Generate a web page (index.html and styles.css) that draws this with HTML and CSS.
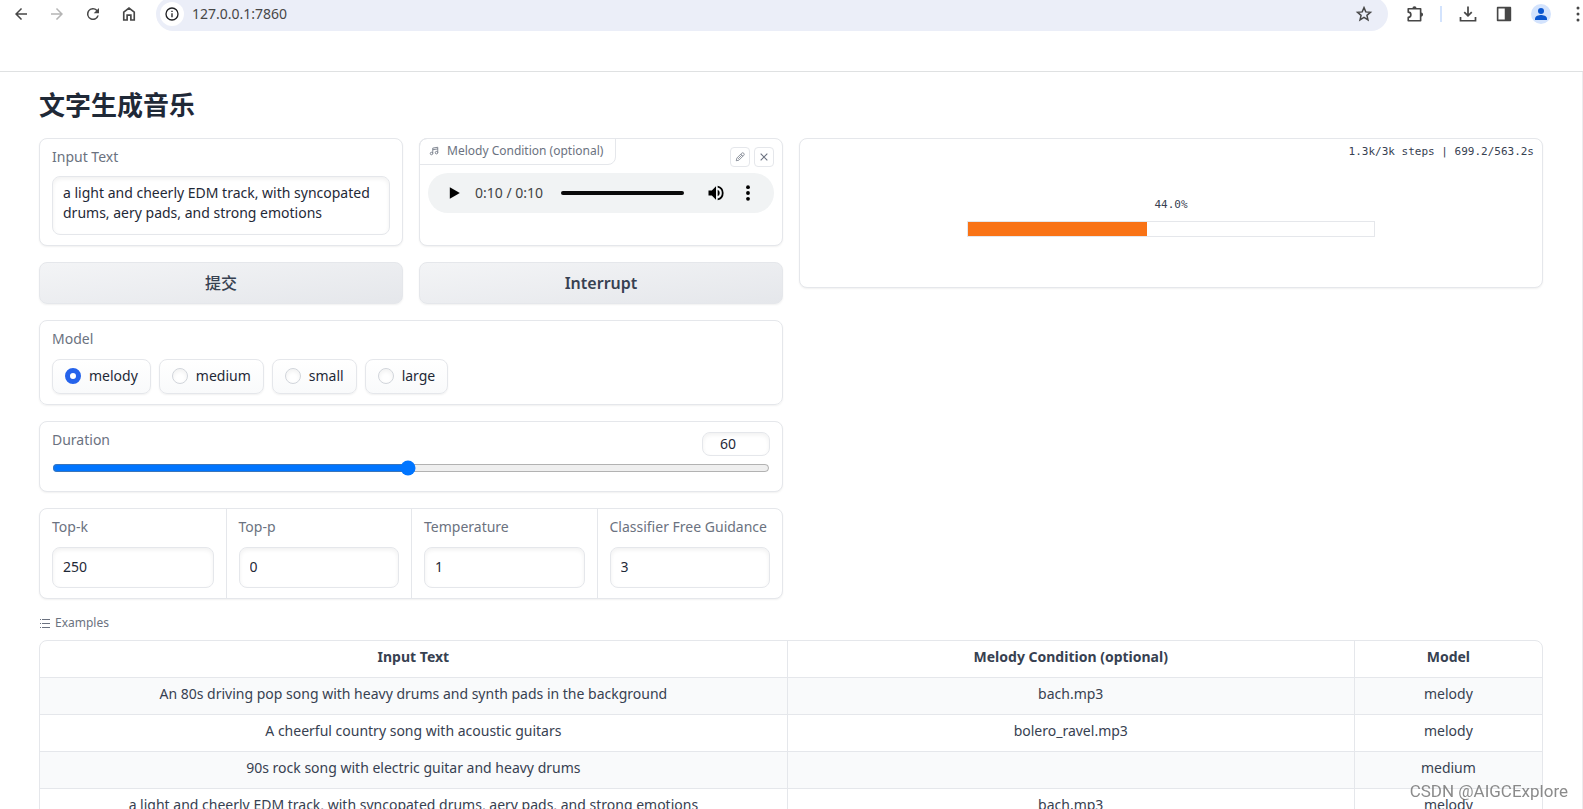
FILE: index.html
```html
<!DOCTYPE html>
<html lang="zh">
<head>
<meta charset="utf-8">
<title>文字生成音乐</title>
<link rel="stylesheet" href="styles.css">
</head>
<body>
<header class="browser">
  <nav class="toolbar" aria-label="Browser">
    <button class="tool" aria-label="Back"><svg viewBox="0 0 24 24"><path d="M20 11H7.8l5.6-5.6L12 4l-8 8 8 8 1.400-1.400L7.800 13H20z"/></svg></button>
    <button class="tool faded" aria-label="Forward"><svg viewBox="0 0 24 24"><path d="M4 11h12.200l-5.600-5.600L12 4l8 8-8 8-1.400-1.400 5.600-5.600H4z"/></svg></button>
    <button class="tool" aria-label="Reload"><svg viewBox="0 0 24 24"><path d="M17.650 6.350A8 8 0 1 0 19.730 14h-2.080A6 6 0 1 1 12 6c1.660 0 3.140.690 4.220 1.780L13 11h7V4z"/></svg></button>
    <button class="tool" aria-label="Home"><svg viewBox="0 0 24 24" fill="none" stroke="currentColor" stroke-width="2.200"><path d="M5 9.500 12 4l7 5.500V20h-4.500v-6.500h-5V20H5z"/></svg></button>
    <div class="address">
      <button class="info" aria-label="Site information"><svg viewBox="0 0 24 24"><path d="M11 7h2v2h-2zm0 4h2v6h-2zm1-9a10 10 0 1 0 0 20 10 10 0 0 0 0-20zm0 18a8 8 0 1 1 0-16 8 8 0 0 1 0 16z"/></svg></button>
      <input class="url" aria-label="Address" value="127.0.0.1:7860">
      <button class="tool star" aria-label="Bookmark"><svg viewBox="0 0 24 24" fill="none" stroke="currentColor" stroke-width="2"><path d="m12 3.500 2.400 5.700 6.200.500-4.700 4.100 1.400 6-5.300-3.200-5.300 3.200 1.400-6-4.700-4.100 6.200-.500z"/></svg></button>
    </div>
    <button class="tool" aria-label="Extensions"><svg viewBox="0 0 24 24"><path fill="none" stroke="currentColor" stroke-width="2.200" stroke-linejoin="round" d="M3 5h16.500v16H3v-4.500a3.500 3.500 0 0 0 0-7z"/><path d="M8.500 4.500a2.800 2.800 0 0 1 5.600 0zM20 10a2.800 2.800 0 0 1 0 5.600z"/></svg></button>
    <span class="separator"></span>
    <button class="tool" aria-label="Downloads"><svg viewBox="0 0 24 24" fill="none" stroke="currentColor" stroke-width="2.300"><path d="M12 2v12M7 9.500l5 5 5-5M2 16v5h20v-5"/></svg></button>
    <button class="tool" aria-label="Side panel"><svg viewBox="0 0 24 24"><path fill="none" stroke="currentColor" stroke-width="2.200" stroke-linejoin="round" d="M3.500 3.500h17v17h-17z"/><path d="M13 3.500h7.500v17H13z"/></svg></button>
    <button class="avatar" aria-label="Profile"><svg viewBox="0 0 20 20"><circle cx="10" cy="7" r="3"/><path d="M4 16v-1.500C4 12 8 11 10 11s6 1 6 3.500V16z"/></svg></button>
    <button class="tool kebab" aria-label="Menu"><svg viewBox="0 0 24 24"><circle cx="12" cy="4" r="2"/><circle cx="12" cy="12" r="2"/><circle cx="12" cy="20" r="2"/></svg></button>
  </nav>
</header>
<main class="page">
  <h1>文字生成音乐</h1>
  <div class="columns">
    <form class="stack">
      <div class="pair">
        <div class="card padded">
          <label class="label" for="prompt">Input Text</label>
          <textarea id="prompt" class="field prompt" rows="2">a light and cheerly EDM track, with syncopated drums, aery pads, and strong emotions</textarea>
        </div>
        <section class="card audio-card">
          <div class="audio-label"><svg viewBox="0 0 24 24" fill="none" stroke="currentColor" stroke-width="2"><path d="M9 18V5l12-2v13M9 9l12-2"/><circle cx="6" cy="18" r="3"/><circle cx="18" cy="16" r="3"/></svg>Melody Condition (optional)</div>
          <div class="audio-actions">
            <button type="button" aria-label="Edit"><svg viewBox="0 0 24 24" fill="none" stroke="currentColor" stroke-width="1.800"><path d="m3 21 1.500-6.500L16 3a3.300 3.300 0 0 1 5 5L9.500 19.500zM14 5l5 5M7.500 16.500l9-9"/></svg></button>
            <button type="button" aria-label="Clear"><svg viewBox="0 0 24 24" fill="none" stroke="currentColor" stroke-width="2.600"><path d="m4 4 16 16M20 4 4 20"/></svg></button>
          </div>
          <div class="player">
            <button type="button" aria-label="Play"><svg viewBox="0 0 24 24"><path d="M7 5v14l12-7z"/></svg></button>
            <span class="time">0:10 / 0:10</span>
            <span class="timeline"></span>
            <button type="button" aria-label="Volume"><svg viewBox="0 0 24 24"><path d="M3 9v6h4l5 5V4L7 9zm13.500 3A4.500 4.500 0 0 0 14 8v8a4.500 4.500 0 0 0 2.500-4zM14 3.200v2.100a7 7 0 0 1 0 13.400v2.100a9 9 0 0 0 0-17.600z"/></svg></button>
            <button type="button" aria-label="More"><svg viewBox="0 0 24 24"><circle cx="12" cy="5" r="2.300"/><circle cx="12" cy="12" r="2.300"/><circle cx="12" cy="19" r="2.300"/></svg></button>
          </div>
        </section>
      </div>
      <div class="pair">
        <button type="button" class="action submit">提交</button>
        <button type="button" class="action">Interrupt</button>
      </div>
      <fieldset class="card padded">
        <div class="label">Model</div>
        <div class="options">
          <label class="option"><input type="radio" name="model" checked>melody</label>
          <label class="option"><input type="radio" name="model">medium</label>
          <label class="option"><input type="radio" name="model">small</label>
          <label class="option"><input type="radio" name="model">large</label>
        </div>
      </fieldset>
      <div class="card padded duration">
        <div class="duration-head">
          <label class="label" for="duration">Duration</label>
          <input class="field amount" type="number" aria-label="Duration in seconds" value="60">
        </div>
        <input id="duration" class="slider" type="range" min="1" max="120" value="60">
      </div>
      <div class="card numbers">
        <div class="number"><label class="label" for="topk">Top-k</label><input id="topk" class="field" type="number" value="250"></div>
        <div class="number"><label class="label" for="topp">Top-p</label><input id="topp" class="field" type="number" value="0"></div>
        <div class="number"><label class="label" for="temp">Temperature</label><input id="temp" class="field" type="number" value="1"></div>
        <div class="number"><label class="label" for="cfg">Classifier Free Guidance</label><input id="cfg" class="field" type="number" value="3"></div>
      </div>
    </form>
    <section class="card output">
      <div class="steps">1.3k/3k steps | 699.2/563.2s</div>
      <div class="progress">
        <div class="percent">44.0%</div>
        <div class="bar"><div class="bar-fill" style="width:44%"></div></div>
      </div>
    </section>
  </div>
  <section>
    <div class="examples-label"><svg viewBox="0 0 12 12" fill="none" stroke="currentColor"><path d="M3 2.500h8M3 6.500h8M3 10.500h8M1 2.500h1M1 6.500h1M1 10.500h1"/></svg>Examples</div>
    <div class="table-wrap">
      <table>
        <colgroup><col class="c-text"><col class="c-melody"><col></colgroup>
        <thead><tr><th>Input Text</th><th>Melody Condition (optional)</th><th>Model</th></tr></thead>
        <tbody>
          <tr><td>An 80s driving pop song with heavy drums and synth pads in the background</td><td>bach.mp3</td><td>melody</td></tr>
          <tr><td>A cheerful country song with acoustic guitars</td><td>bolero_ravel.mp3</td><td>melody</td></tr>
          <tr><td>90s rock song with electric guitar and heavy drums</td><td></td><td>medium</td></tr>
          <tr><td>a light and cheerly EDM track, with syncopated drums, aery pads, and strong emotions</td><td>bach.mp3</td><td>melody</td></tr>
        </tbody>
      </table>
    </div>
  </section>
</main>
<div class="watermark">CSDN @AIGCExplore</div>
</body>
</html>
```
FILE: styles.css
```css
* { box-sizing: border-box; }

body {
  margin: 0;
  height: 100vh;
  overflow: hidden;
  display: flex;
  flex-direction: column;
  background: #fff;
  color: #1f2937;
  font: 14px/20px "Noto Sans", "Noto Sans CJK SC", sans-serif;
}

button, input, textarea { font: inherit; color: inherit; margin: 0; }
button { border: 0; padding: 0; background: none; }
svg { display: block; fill: currentColor; }
svg[fill="none"] { fill: none; }

.browser {
  flex: none;
  height: 72px;
  border-bottom: 1px solid #dfe1e2;
}
.toolbar {
  display: flex;
  align-items: center;
  height: 28px;
  padding-left: 12px;
  gap: 18px;
  color: #474747;
}
.tool { flex: none; width: 18px; }
.tool svg { width: 18px; height: 18px; }
.faded { color: #b5b5b5; }
.address {
  flex: 1;
  display: flex;
  align-items: center;
  height: 34px;
  padding: 0 15px 0 4px;
  gap: 8px;
  border-radius: 17px;
  background: #ebeef8;
}
.info {
  flex: none;
  display: grid;
  place-items: center;
  width: 24px;
  height: 24px;
  border-radius: 50%;
  background: #fff;
  color: #202124;
}
.info svg { width: 16px; height: 16px; }
.url {
  flex: 1;
  min-width: 0;
  border: 0;
  padding: 0;
  background: none;
  color: #474747;
}
.separator { width: 2px; height: 16px; margin: 0 -1px 0 -2px; background: #d3e3fd; }
.avatar {
  flex: none;
  width: 20px;
  height: 20px;
  border-radius: 50%;
  background: #d3e3fd;
  color: #0b57d0;
}
.kebab { margin-right: -4px; }

.page {
  flex: 1;
  min-height: 0;
  overflow: hidden;
  padding: 16px 39px 0;
  border-right: 1px solid #ececee;
}
h1 { margin: 0 0 16px; font-size: 26px; line-height: 34px; }

.columns {
  display: grid;
  grid-template-columns: 1fr 1fr;
  align-items: start;
  gap: 16px;
}
.stack { display: grid; gap: 16px; }
.pair { display: grid; grid-template-columns: 1fr 1fr; gap: 16px; }
.card {
  min-width: 0;
  margin: 0;
  padding: 0;
  border: 1px solid #e5e7eb;
  border-radius: 8px;
  background: #fff;
  box-shadow: 0 1px 2px rgba(0, 0, 0, .06);
}
.padded { padding: 8px 12px 10px; }
.label { display: block; color: #6b7280; }
.field {
  display: block;
  width: 100%;
  border: 1px solid #e5e7eb;
  border-radius: 8px;
  background: #fff;
  box-shadow: inset 0 2px 4px rgba(0, 0, 0, .06);
  outline: 0;
  resize: none;
  appearance: textfield;
}
.prompt { height: 59px; margin-top: 9px; padding: 6px 10px; overflow: hidden; }

.audio-card { position: relative; padding: 34px 8px 0; }
.audio-label {
  position: absolute;
  top: -1px;
  left: -1px;
  display: flex;
  align-items: center;
  gap: 8px;
  height: 27px;
  padding: 0 12px 2px 9px;
  border: 1px solid #e5e7eb;
  border-radius: 8px 0 8px 0;
  color: #6b7280;
  font-size: 12px;
}
.audio-label svg { width: 10px; height: 10px; }
.audio-actions { position: absolute; top: 8px; right: 8px; display: flex; gap: 4px; }
.audio-actions button {
  display: grid;
  place-items: center;
  width: 20px;
  height: 20px;
  border: 1px solid #e5e7eb;
  border-radius: 4px;
  color: #6b7280;
}
.audio-actions svg { width: 10px; height: 10px; }
.player {
  display: flex;
  align-items: center;
  height: 40px;
  padding: 0 16px;
  border-radius: 20px;
  background: #f1f3f4;
  color: #000;
}
.player svg { width: 20px; height: 20px; }
.time { margin-left: 11px; color: #444; }
.timeline { flex: 1; height: 4px; margin: 0 22px 0 18px; border-radius: 2px; background: #0a0a0a; }
.player button + button { margin-left: 12px; }

.action {
  height: 42px;
  border: 1px solid #e5e7eb;
  border-radius: 8px;
  background: linear-gradient(to bottom right, #f3f4f6, #e5e7eb);
  box-shadow: 0 1px 2px rgba(0, 0, 0, .06);
  color: #374151;
  font-size: 16px;
  font-weight: 600;
}
.submit { font-weight: 500; }

.options { display: flex; gap: 8px; margin-top: 10px; }
.option {
  display: flex;
  align-items: center;
  gap: 8px;
  height: 35px;
  padding: 0 12px 1px;
  border: 1px solid #e5e7eb;
  border-radius: 8px;
  background: linear-gradient(#fff, #f9fafb);
  box-shadow: 0 1px 2px rgba(0, 0, 0, .06);
}
.option input {
  appearance: none;
  width: 16px;
  height: 16px;
  border: 1px solid #d1d5db;
  border-radius: 50%;
  background: #fff;
  box-shadow: inset 0 2px 4px rgba(0, 0, 0, .06);
}
.option input:checked { border: 5px solid #2563eb; box-shadow: none; }

.duration { height: 71px; }
.duration-head { display: flex; justify-content: space-between; }
.amount { width: 68px; height: 24px; margin-top: 2px; padding: 0 17px 2px; }
.slider {
  display: block;
  width: 100%;
  height: 16px;
  margin: 4px 0 0;
  accent-color: #0075ff;
}

.numbers { display: grid; grid-template-columns: repeat(4, 1fr); }
.number { min-width: 0; padding: 8px 12px 10px; white-space: nowrap; }
.number + .number { border-left: 1px solid #e5e7eb; }
.number .field { height: 41px; margin-top: 10px; padding: 0 10px 2px; }

.output { display: flex; flex-direction: column; height: 150px; font-family: "DejaVu Sans Mono", monospace; color: #374151; }
.steps { padding: 3px 8px 0; text-align: right; font-size: 11px; }
.progress { width: 55%; margin: 33px auto 0; }
.percent { text-align: center; font-size: 11px; line-height: 20px; }
.bar { height: 16px; margin-top: 6px; border: 1px solid #e5e7eb; }
.bar-fill { height: 100%; background: #f97316; }

.examples-label {
  display: flex;
  align-items: center;
  gap: 4px;
  margin: 14px 0 7px;
  color: #6b7280;
  font-size: 12px;
}
.examples-label svg { width: 12px; height: 12px; }
.table-wrap { overflow: hidden; border: 1px solid #e5e7eb; border-radius: 8px; }
table { width: 100%; table-layout: fixed; border-collapse: collapse; color: #374151; }
.c-text { width: 49.75%; }
.c-melody { width: 37.75%; }
th, td { padding: 0 8px 3px; text-align: center; white-space: nowrap; }
th { height: 36px; font-weight: 700; }
td { height: 37px; }
th + th, td + td { border-left: 1px solid #e5e7eb; }
tbody tr { border-top: 1px solid #e5e7eb; }
tbody tr:nth-child(odd) { background: #f9fafb; }

.watermark {
  position: fixed;
  right: 15px;
  bottom: 7px;
  color: rgba(110, 110, 110, .8);
  font: 17px/22px Roboto, sans-serif;
}
```
